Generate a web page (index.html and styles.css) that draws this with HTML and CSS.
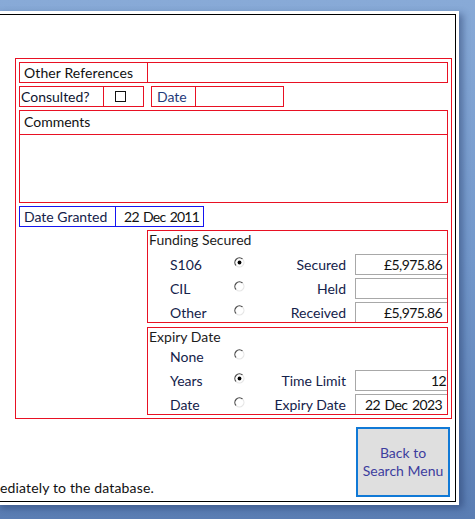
FILE: index.html
```html
<!DOCTYPE html>
<html lang="en">
<head>
<meta charset="utf-8">
<title>Planning detail</title>
<link rel="stylesheet" href="styles.css">
</head>
<body>
<div class="window">
  <div class="frame">
    <div class="detail">
      <div class="field wide">
        <div class="lbl lbl-ref">Other References</div>
        <div class="val"></div>
      </div>
      <div class="row-consult">
        <div class="field consult">
          <div class="lbl lbl-consult">Consulted?</div>
          <div class="chk-cell"><span class="chk"></span></div>
        </div>
        <div class="field date">
          <div class="lbl lbl-date">Date</div>
          <div class="val"></div>
        </div>
      </div>
      <div class="comments">
        <div class="comments-head">Comments</div>
        <div class="comments-body"></div>
      </div>
      <div class="field granted">
        <div class="lbl lbl-granted">Date Granted</div>
        <div class="val val-granted">22 Dec 2011</div>
      </div>
      <div class="group funding">
        <div class="group-title">Funding Secured</div>
        <div class="opt-row">
          <span class="opt-lbl">S106</span>
          <svg class="radio" viewBox="0 0 11 11" width="11" height="11"><path d="M8.6 2.2 A4.3 4.3 0 0 0 2.2 8.6" fill="none" stroke="#4a4a4a" stroke-width="1.2"/><path d="M2.2 8.6 A4.3 4.3 0 0 0 8.6 2.2" fill="none" stroke="#e6e6e6" stroke-width="1.2"/><circle cx="5.5" cy="5.5" r="1.9" fill="#000"/></svg>
          <span class="amt-lbl">Secured</span>
          <div class="tb">£5,975.86</div>
        </div>
        <div class="opt-row">
          <span class="opt-lbl">CIL</span>
          <svg class="radio" viewBox="0 0 11 11" width="11" height="11"><path d="M8.6 2.2 A4.3 4.3 0 0 0 2.2 8.6" fill="none" stroke="#4a4a4a" stroke-width="1.2"/><path d="M2.2 8.6 A4.3 4.3 0 0 0 8.6 2.2" fill="none" stroke="#e6e6e6" stroke-width="1.2"/></svg>
          <span class="amt-lbl">Held</span>
          <div class="tb"></div>
        </div>
        <div class="opt-row">
          <span class="opt-lbl">Other</span>
          <svg class="radio" viewBox="0 0 11 11" width="11" height="11"><path d="M8.6 2.2 A4.3 4.3 0 0 0 2.2 8.6" fill="none" stroke="#4a4a4a" stroke-width="1.2"/><path d="M2.2 8.6 A4.3 4.3 0 0 0 8.6 2.2" fill="none" stroke="#e6e6e6" stroke-width="1.2"/></svg>
          <span class="amt-lbl">Received</span>
          <div class="tb">£5,975.86</div>
        </div>
      </div>
      <div class="group expiry">
        <div class="group-title">Expiry Date</div>
        <div class="opt-row">
          <span class="opt-lbl">None</span>
          <svg class="radio" viewBox="0 0 11 11" width="11" height="11"><path d="M8.6 2.2 A4.3 4.3 0 0 0 2.2 8.6" fill="none" stroke="#4a4a4a" stroke-width="1.2"/><path d="M2.2 8.6 A4.3 4.3 0 0 0 8.6 2.2" fill="none" stroke="#e6e6e6" stroke-width="1.2"/></svg>
        </div>
        <div class="opt-row">
          <span class="opt-lbl">Years</span>
          <svg class="radio" viewBox="0 0 11 11" width="11" height="11"><path d="M8.6 2.2 A4.3 4.3 0 0 0 2.2 8.6" fill="none" stroke="#4a4a4a" stroke-width="1.2"/><path d="M2.2 8.6 A4.3 4.3 0 0 0 8.6 2.2" fill="none" stroke="#e6e6e6" stroke-width="1.2"/><circle cx="5.5" cy="5.5" r="1.9" fill="#000"/></svg>
          <span class="amt-lbl">Time Limit</span>
          <div class="tb tb-tight">12</div>
        </div>
        <div class="opt-row">
          <span class="opt-lbl">Date</span>
          <svg class="radio" viewBox="0 0 11 11" width="11" height="11"><path d="M8.6 2.2 A4.3 4.3 0 0 0 2.2 8.6" fill="none" stroke="#4a4a4a" stroke-width="1.2"/><path d="M2.2 8.6 A4.3 4.3 0 0 0 8.6 2.2" fill="none" stroke="#e6e6e6" stroke-width="1.2"/></svg>
          <span class="amt-lbl">Expiry Date</span>
          <div class="tb">22 Dec 2023</div>
        </div>
      </div>
    </div>
    <div class="footer">
      <div class="note">ediately to the database.</div>
      <button class="back" type="button">Back to<br>Search Menu</button>
    </div>
  </div>
</div>
</body>
</html>
```
FILE: styles.css
```css
html, body {
  margin: 0;
  padding: 0;
}
body {
  width: 475px;
  height: 519px;
  overflow: hidden;
  background: linear-gradient(180deg, #88aad7 0%, #7398cb 50%, #5a7db3 100%);
  font-family: Lato, "Liberation Sans", sans-serif;
  font-size: 14px;
  color: #111;
}
.window {
  box-sizing: border-box;
  width: 463px;
  height: 494px;
  margin: 11px 0 0 -4px;
  padding: 3px;
  background: #fff;
  box-shadow: 4px 3px 7px rgba(25, 45, 90, 0.45);
}
.frame {
  box-sizing: border-box;
  width: 457px;
  height: 488px;
  border: 1px solid #000;
  display: flex;
  flex-direction: column;
}
.detail {
  box-sizing: border-box;
  width: 437px;
  margin: 43px 0 0 15px;
  padding: 3px;
  border: 1px solid #e81123;
  display: flex;
  flex-direction: column;
  gap: 3px;
}
.field {
  box-sizing: border-box;
  height: 21px;
  border: 1px solid #e81123;
  display: flex;
  line-height: 19px;
}
.lbl {
  box-sizing: border-box;
  border-right: 1px solid #e81123;
  white-space: nowrap;
}
.val {
  flex: 1;
}
.lbl-ref {
  width: 128px;
  padding-left: 4px;
  letter-spacing: 0.1px;
}
.row-consult {
  display: flex;
  gap: 7px;
}
.consult {
  width: 125px;
}
.lbl-consult {
  width: 84px;
  padding-left: 1px;
  color: #0d1430;
}
.chk-cell {
  flex: 1;
  padding: 4px 0 0 11px;
}
.chk {
  display: block;
  box-sizing: border-box;
  width: 11px;
  height: 11px;
  border: 1px solid #111;
}
.date {
  width: 133px;
}
.lbl-date {
  width: 44px;
  padding-left: 5px;
  color: #1f3b7a;
}
.comments {
  box-sizing: border-box;
  height: 93px;
  border: 1px solid #e81123;
  display: flex;
  flex-direction: column;
}
.comments-head {
  box-sizing: border-box;
  height: 24px;
  padding: 2px 0 0 4px;
  line-height: 18px;
  border-bottom: 1px solid #e81123;
}
.comments-body {
  flex: 1;
}
.granted {
  width: 185px;
  border-color: #1515f0;
}
.lbl-granted {
  width: 96px;
  padding-left: 4px;
  border-right-color: #1515f0;
  color: #14224a;
}
.val-granted {
  text-align: right;
  padding-right: 4px;
  letter-spacing: -0.8px;
  word-spacing: 1.6px;
}
.group {
  box-sizing: border-box;
  width: 301px;
  margin-left: 128px;
  border: 1px solid #e81123;
  overflow: hidden;
  display: flex;
  flex-direction: column;
}
.funding {
  height: 93px;
}
.expiry {
  height: 88px;
  margin-top: 1px;
}
.group-title {
  flex: none;
  padding-left: 1px;
  line-height: 18px;
  color: #1c1c1c;
}
.funding .group-title {
  height: 23px;
}
.expiry .group-title {
  height: 18px;
}
.opt-row {
  flex: none;
  height: 21px;
  display: grid;
  grid-template-columns: 64px 11px 110px 93px;
  padding-left: 22px;
  line-height: 21px;
}
.opt-row + .opt-row {
  margin-top: 3px;
}
.opt-lbl {
  color: #14224a;
}
.radio {
  display: block;
  margin-top: 3px;
}
.amt-lbl {
  text-align: right;
  padding-right: 9px;
  color: #14224a;
  white-space: nowrap;
}
.tb {
  box-sizing: border-box;
  height: 21px;
  border: 1px solid #a8a8a8;
  text-align: right;
  padding-right: 5px;
  line-height: 19px;
  color: #111;
  letter-spacing: -0.6px;
  word-spacing: 1.5px;
}
.tb-tight {
  padding-right: 1px;
}
.footer {
  flex: 1;
  display: flex;
  justify-content: space-between;
  align-items: flex-end;
  padding: 0 5px 4px 0;
}
.note {
  line-height: 18px;
  white-space: nowrap;
  color: #111;
  letter-spacing: 0.15px;
}
.back {
  box-sizing: border-box;
  width: 94px;
  height: 70px;
  margin: 0;
  padding: 0;
  border: 2px solid #1079d6;
  background: #dfdfdf;
  color: #3d3d9e;
  font-family: Lato, "Liberation Sans", sans-serif;
  font-size: 14px;
  line-height: 18px;
  text-align: center;
}
```
